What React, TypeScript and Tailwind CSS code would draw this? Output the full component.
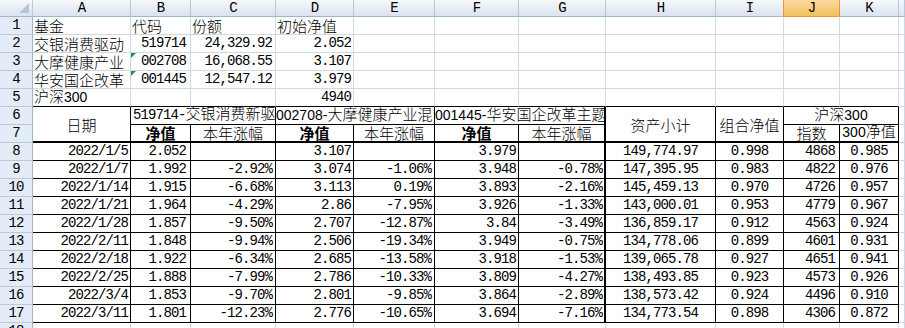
import React from "react";

const MONO = "font-['Liberation_Mono',monospace] text-[14px] tracking-[-0.9px]";
const SANS = "font-['Liberation_Sans',sans-serif] text-[14px] font-normal";

function T({ s, bold = false, sans = false }: { s: string; bold?: boolean; sans?: boolean }) {
  const parts = s.split(/([\x00-\x7f]+)/).filter((p) => p.length > 0);
  return (
    <span className={`leading-[17px] ${bold ? "font-bold" : "font-light"}`}>
      {parts.map((p, i) =>
        /^[\x00-\x7f]+$/.test(p) ? (
          <span key={i} className={sans && /\d/.test(p) ? SANS : MONO}>
            {p}
          </span>
        ) : (
          <span key={i}>{p}</span>
        )
      )}
    </span>
  );
}

const BASE =
  "relative flex min-w-0 overflow-hidden whitespace-nowrap box-border text-black font-['Noto_Sans_CJK_SC',sans-serif] text-[15px]";

function Cell({
  t = "",
  cls,
  bold = false,
  tri = false,
  sans = false,
}: {
  t?: string;
  cls: string;
  bold?: boolean;
  tri?: boolean;
  sans?: boolean;
}) {
  return (
    <div className={`${BASE} ${cls}`}>
      {tri && (
        <svg className="absolute left-0 top-0" width="6" height="6" viewBox="0 0 6 6">
          <polygon points="0,0 5,0 0,5" fill="#1a9a3a" />
        </svg>
      )}
      {t ? <T s={t} bold={bold} sans={sans} /> : null}
    </div>
  );
}

const GRID = "border-r border-b border-[#d0d7e5]";
const TBL = "border-r border-b border-black";
const TBL_B2 = "border-r border-b-2 border-black";
const TBL_R2 = "border-r-2 border-b border-black";
const TBL_R2B2 = "border-r-2 border-b-2 border-black";
const TOPT = "border-r border-b border-r-[#d0d7e5] border-b-black";

const ROWH =
  "items-center justify-center bg-[#e4ecf7] border-r border-b border-r-[#9eb6ce] border-b-[#b9c9dc] text-[#27413e]";
const COLH =
  "items-center justify-center bg-linear-to-b from-[#f6f8fb] to-[#dae3ef] border-r border-b border-r-[#b9c9dc] border-b-[#9eb6ce] text-[#27413e]";
const COLH_SEL =
  "items-center justify-center bg-linear-to-b from-[#f9da9f] to-[#f1c05e] border-r border-b border-[#f29436] text-[#27413e]";
const COLH_PRESEL =
  "items-center justify-center bg-linear-to-b from-[#f6f8fb] to-[#dae3ef] border-r border-b border-r-[#f29436] border-b-[#9eb6ce] text-[#27413e]";

const LETTERS = ["A", "B", "C", "D", "E", "F", "G", "H", "I", "J", "K"];

const RA: Record<string, string> = {
  A: "items-end justify-end pr-[2px]",
  B: "items-end justify-end pr-[4px]",
  C: "items-end justify-end pr-[3px]",
  D: "items-end justify-end pr-[2px]",
  E: "items-end justify-end pr-[3px]",
  F: "items-end justify-end pr-[2px]",
  G: "items-end justify-end pr-[2px]",
  H: "items-end justify-center",
  I: "items-end justify-center",
  J: "items-end justify-end pr-[4px]",
  K: "items-end justify-center",
};
const LA = "items-end justify-start pl-[1px]";

const top: string[][] = [
  ["基金", "代码", "份额", "初始净值"],
  ["交银消费驱动", "519714", "24,329.92", "2.052"],
  ["大摩健康产业", "002708", "16,068.55", "3.107"],
  ["华安国企改革", "001445", "12,547.12", "3.979"],
  ["沪深300", "", "", "4940"],
];

const data: string[][] = [
  ["2022/1/5", "2.052", "", "3.107", "", "3.979", "", "149,774.97", "0.998", "4868", "0.985"],
  ["2022/1/7", "1.992", "-2.92%", "3.074", "-1.06%", "3.948", "-0.78%", "147,395.95", "0.983", "4822", "0.976"],
  ["2022/1/14", "1.915", "-6.68%", "3.113", "0.19%", "3.893", "-2.16%", "145,459.13", "0.970", "4726", "0.957"],
  ["2022/1/21", "1.964", "-4.29%", "2.86", "-7.95%", "3.926", "-1.33%", "143,000.01", "0.953", "4779", "0.967"],
  ["2022/1/28", "1.857", "-9.50%", "2.707", "-12.87%", "3.84", "-3.49%", "136,859.17", "0.912", "4563", "0.924"],
  ["2022/2/11", "1.848", "-9.94%", "2.506", "-19.34%", "3.949", "-0.75%", "134,778.06", "0.899", "4601", "0.931"],
  ["2022/2/18", "1.922", "-6.34%", "2.685", "-13.58%", "3.918", "-1.53%", "139,065.78", "0.927", "4651", "0.941"],
  ["2022/2/25", "1.888", "-7.99%", "2.786", "-10.33%", "3.809", "-4.27%", "138,493.85", "0.923", "4573", "0.926"],
  ["2022/3/4", "1.853", "-9.70%", "2.801", "-9.85%", "3.864", "-2.89%", "138,573.42", "0.924", "4496", "0.910"],
  ["2022/3/11", "1.801", "-12.23%", "2.776", "-10.65%", "3.694", "-7.16%", "134,773.54", "0.898", "4306", "0.872"],
];

export default function App() {
  const cells: React.ReactNode[] = [];
  let k = 0;
  const push = (n: React.ReactNode) => cells.push(<React.Fragment key={k++}>{n}</React.Fragment>);
  const rowHead = (n: number) =>
    push(
      <div className={`${BASE} ${ROWH}`}>
        <span className={`${MONO} leading-[17px]`}>{n}</span>
      </div>
    );

  // header row
  push(
    <div className={`${BASE} ${COLH}`}>
      <svg className="absolute left-0 top-0" width="33" height="17" viewBox="0 0 33 17">
        <polygon points="19,13 29,13 29,3" fill="#b5c5da" />
      </svg>
    </div>
  );
  LETTERS.forEach((L) =>
    push(
      <div className={`${BASE} ${L === "J" ? COLH_SEL : L === "I" ? COLH_PRESEL : COLH}`}>
        <span className={`${MONO} leading-[16px]`}>{L}</span>
      </div>
    )
  );
  push(<div className={`${BASE} ${COLH}`} />);

  // rows 1-5
  top.forEach((r, ri) => {
    const rowNo = ri + 1;
    rowHead(rowNo);
    LETTERS.forEach((L, ci) => {
      const border = rowNo === 5 ? TOPT : GRID;
      const t = ci < 4 ? r[ci] : "";
      let al = LA;
      if (rowNo > 1 && ci >= 1) al = RA[L];
      push(
        <Cell
          t={t}
          cls={`${border} ${al}`}
          tri={(rowNo === 3 || rowNo === 4) && ci === 1}
          sans={rowNo === 5 && ci === 0}
        />
      );
    });
    push(<Cell cls={GRID} />);
  });

  // row 6
  rowHead(6);
  push(<Cell t="日期" cls={`row-span-2 ${TBL_B2} items-center justify-center`} />);
  push(<Cell t="519714-交银消费新驱动股票" cls={`col-span-2 ${TBL} items-end justify-start pl-[2px]`} />);
  push(<Cell t="002708-大摩健康产业混合" sans cls={`col-span-2 ${TBL} items-end justify-start`} />);
  push(<Cell t="001445-华安国企改革主题灵活配置" sans cls={`col-span-2 ${TBL_R2} items-end justify-start`} />);
  push(<Cell t="资产小计" cls={`row-span-2 ${TBL_B2} items-center justify-center`} />);
  push(<Cell t="组合净值" cls={`row-span-2 ${TBL_B2} items-center justify-center`} />);
  push(<Cell t="沪深300" sans cls={`col-span-2 ${TBL} items-end justify-center`} />);
  push(<Cell cls={GRID} />);

  // row 7
  rowHead(7);
  push(<Cell t="净值" bold cls={`${TBL_B2} items-end justify-center`} />);
  push(<Cell t="本年涨幅" cls={`${TBL_B2} items-end justify-center`} />);
  push(<Cell t="净值" bold cls={`${TBL_B2} items-end justify-center`} />);
  push(<Cell t="本年涨幅" cls={`${TBL_B2} items-end justify-center`} />);
  push(<Cell t="净值" bold cls={`${TBL_B2} items-end justify-center`} />);
  push(<Cell t="本年涨幅" cls={`${TBL_R2B2} items-end justify-center`} />);
  push(<Cell t="指数" cls={`${TBL_B2} items-end justify-center`} />);
  push(<Cell t="300净值" sans cls={`${TBL_B2} items-end justify-center`} />);
  push(<Cell cls={GRID} />);

  // rows 8-17
  data.forEach((r, ri) => {
    rowHead(ri + 8);
    LETTERS.forEach((L, ci) => {
      const border = L === "G" ? TBL_R2 : TBL;
      push(<Cell t={r[ci]} cls={`${border} ${RA[L]}`} />);
    });
    push(<Cell cls={GRID} />);
  });

  // row 18 (partial)
  rowHead(18);
  LETTERS.forEach(() => push(<Cell cls={GRID} />));
  push(<Cell cls={GRID} />);

  return (
    <div className="w-[905px] h-[328px] overflow-hidden bg-white">
      <div className="grid grid-cols-[33px_98px_60px_85px_78px_81px_84px_87px_110px_68px_56px_59px_1fr] grid-rows-[17px_repeat(18,18px)]">
        {cells}
      </div>
    </div>
  );
}
